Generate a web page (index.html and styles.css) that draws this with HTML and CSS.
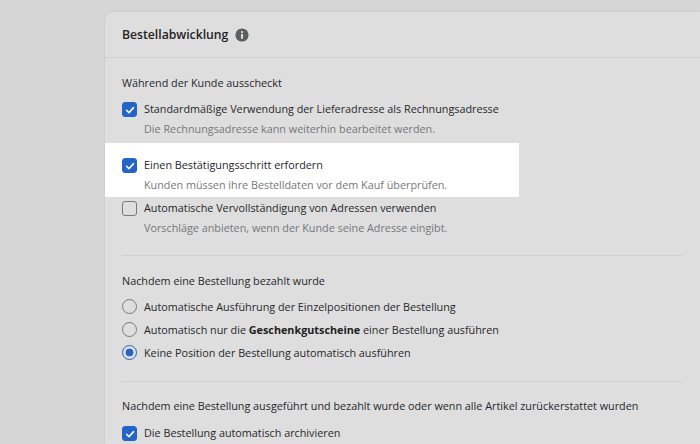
FILE: index.html
```html
<!DOCTYPE html>
<html lang="de">
<head>
<meta charset="utf-8">
<title>Bestellabwicklung</title>
<link rel="stylesheet" href="styles.css">
</head>
<body>
<svg class="defs" width="0" height="0" aria-hidden="true">
  <symbol id="tick" viewBox="0 0 14 14"><path d="M3.6 7.3 6 9.7 10.5 4.6" fill="none" stroke="#fff" stroke-width="1.6" stroke-linecap="round" stroke-linejoin="round"/></symbol>
</svg>
<main class="card">
  <header class="card-head">
    <h1 class="title">Bestellabwicklung</h1>
    <svg class="info" viewBox="0 0 14 14" aria-hidden="true"><circle cx="7" cy="7" r="6.6" fill="#5c5f62"/><rect x="6" y="6" width="2" height="4.8" rx=".5" fill="#dedede"/><circle cx="7" cy="4.1" r="1.15" fill="#dedede"/></svg>
  </header>
  <section class="section first">
    <h2 class="label">Während der Kunde ausscheckt</h2>
    <div class="option">
      <span class="box on"><svg class="tick"><use href="#tick"/></svg></span>
      <div><div class="text">Standardmäßige Verwendung der Lieferadresse als Rechnungsadresse</div><div class="hint">Die Rechnungsadresse kann weiterhin bearbeitet werden.</div></div>
    </div>
    <div class="option highlight">
      <span class="box on"><svg class="tick"><use href="#tick"/></svg></span>
      <div><div class="text">Einen Bestätigungsschritt erfordern</div><div class="hint">Kunden müssen ihre Bestelldaten vor dem Kauf überprüfen.</div></div>
    </div>
    <div class="option after">
      <span class="box"></span>
      <div><div class="text">Automatische Vervollständigung von Adressen verwenden</div><div class="hint">Vorschläge anbieten, wenn der Kunde seine Adresse eingibt.</div></div>
    </div>
  </section>
  <section class="section radios">
    <h2 class="label">Nachdem eine Bestellung bezahlt wurde</h2>
    <div class="radio-row"><span class="radio"></span><span class="text">Automatische Ausführung der Einzelpositionen der Bestellung</span></div>
    <div class="radio-row"><span class="radio"></span><span class="text">Automatisch nur die <b>Geschenkgutscheine</b> einer Bestellung ausführen</span></div>
    <div class="radio-row"><span class="radio on"></span><span class="text">Keine Position der Bestellung automatisch ausführen</span></div>
  </section>
  <section class="section archive">
    <h2 class="label">Nachdem eine Bestellung ausgeführt und bezahlt wurde oder wenn alle Artikel zurückerstattet wurden</h2>
    <div class="option">
      <span class="box on"><svg class="tick"><use href="#tick"/></svg></span>
      <div><div class="text">Die Bestellung automatisch archivieren</div></div>
    </div>
  </section>
</main>
</body>
</html>
```
FILE: styles.css
```css
html, body { margin: 0; height: 100%; overflow: hidden; }
body {
  background: #d6d6d6;
  padding: 12px 0 0 105px;
  font-family: "Open Sans", "Noto Sans", sans-serif;
  font-size: 10.8px;
  line-height: 16px;
  color: #26272a;
  box-sizing: border-box;
}
.defs { position: absolute; }
.card {
  background: #dedede;
  border-radius: 8px 0 0 0;
  height: 432px;
  overflow: hidden;
  box-shadow: 0 0 2px rgba(0,0,0,.12);
}
.card-head {
  height: 45px;
  padding-left: 17px;
  display: flex;
  align-items: center;
  gap: 7px;
  border-bottom: 1px solid #d0d0d0;
}
.title { margin: 0; font-size: 12.2px; font-weight: 600; color: #232426; }
.info { width: 14px; height: 14px; }
.section { margin: 0 17px; padding: 17px 0 19px; border-bottom: 1px solid #d0d0d0; }
.section:last-child { border-bottom: 0; }
.section.first { padding-top: 17px; }
.label { margin: 0 0 7px; font: inherit; }
.option { display: flex; gap: 7px; padding-top: 3px; }
.highlight {
  background: #fff;
  width: 380px;
  margin: 6px 0 0 -17px;
  padding: 14px 17px 0;
  height: 40px;
}
.after { padding-top: 3px; }
.box {
  width: 15px;
  height: 15px;
  box-sizing: border-box;
  flex: none;
  border-radius: 3px;
  border: 1.5px solid #77797c;
  margin-top: 1px;
}
.box.on { background: #2463c7; border-color: #2463c7; position: relative; }
.tick { display: block; width: 14px; height: 14px; margin: -.5px; }
.text { display: block; }
.hint { color: #75777b; margin-top: 4px; }
.radios { padding-bottom: 17px; }
.radios .label { margin-bottom: 6px; }
.archive { padding-top: 16px; }
.archive .label { margin-bottom: 8px; }
.radio-row { display: flex; align-items: center; gap: 7px; height: 23px; }
.radio {
  width: 15px;
  height: 15px;
  box-sizing: border-box;
  border: 1.5px solid #77797c;
  border-radius: 50%;
  flex: none;
}
.radio.on { border-color: #2463c7; background: radial-gradient(circle, #2463c7 0 3.6px, transparent 4.2px); }
b { font-weight: 700; color: #1d1e20; }
```
